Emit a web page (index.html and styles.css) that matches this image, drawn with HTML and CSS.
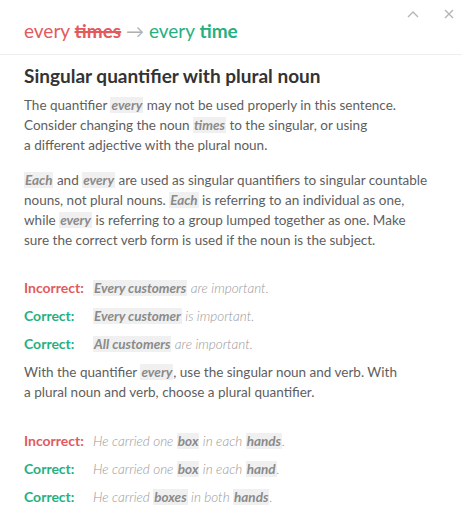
FILE: index.html
```html
<!DOCTYPE html>
<html>
<head>
<meta charset="utf-8">
<link rel="stylesheet" href="styles.css">
</head>
<body>
<div class="card">
  <div class="header">
    <div class="title">
      <span class="bad">every <b class="strike">times</b></span>
      <span class="arrow">&rarr;</span>
      <span class="good">every <b>time</b></span>
    </div>
    <div class="controls">
      <svg class="icon" width="12" height="8" viewBox="0 0 12 8"><path d="M1 7 L6 2 L11 7" fill="none" stroke="#b5b5b5" stroke-width="1.4"/></svg>
      <svg class="icon" width="10" height="10" viewBox="0 0 10 10"><path d="M1 1 L9 9 M9 1 L1 9" fill="none" stroke="#b5b5b5" stroke-width="1.4"/></svg>
    </div>
  </div>
  <div class="content">
    <h1 class="heading">Singular quantifier with plural noun</h1>
    <p class="para">The quantifier <em class="hl">every</em> may not be used properly in this sentence.<br>Consider changing the noun <em class="hl">times</em> to the singular, or using<br>a different adjective with the plural noun.</p>
    <p class="para"><em class="hl">Each</em> and <em class="hl">every</em> are used as singular quantifiers to singular countable<br>nouns, not plural nouns. <em class="hl">Each</em> is referring to an individual as one,<br>while <em class="hl">every</em> is referring to a group lumped together as one. Make<br>sure the correct verb form is used if the noun is the subject.</p>

    <div class="examples first">
      <div class="ex"><span class="label incorrect">Incorrect:</span><span class="sample"><em class="hl">Every customers</em> are important.</span></div>
      <div class="ex"><span class="label correct">Correct:</span><span class="sample"><em class="hl">Every customer</em> is important.</span></div>
      <div class="ex"><span class="label correct">Correct:</span><span class="sample"><em class="hl">All customers</em> are important.</span></div>
    </div>
    <p class="para note">With the quantifier <em class="hl">every</em>, use the singular noun and verb. With<br>a plural noun and verb, choose a plural quantifier.</p>

    <div class="examples second">
      <div class="ex"><span class="label incorrect">Incorrect:</span><span class="sample">He carried one <em class="hl">box</em> in each <em class="hl">hands</em>.</span></div>
      <div class="ex"><span class="label correct">Correct:</span><span class="sample">He carried one <em class="hl">box</em> in each <em class="hl">hand</em>.</span></div>
      <div class="ex"><span class="label correct">Correct:</span><span class="sample">He carried <em class="hl">boxes</em> in both <em class="hl">hands</em>.</span></div>
    </div>
  </div>
</div>
</body>
</html>
```
FILE: styles.css
```css
html, body {
  margin: 0;
  padding: 0;
  background: #fff;
}
body {
  font-family: Lato, "Open Sans", sans-serif;
  width: 462px;
  height: 523px;
  overflow: hidden;
}
.card {
  display: flex;
  flex-direction: column;
}
.header {
  display: flex;
  justify-content: space-between;
  align-items: flex-start;
  height: 54px;
  border-bottom: 1px solid #eeeeee;
  padding: 0 0 0 24px;
}
.title {
  font-size: 19px;
  margin-top: 19px;
  line-height: 24px;
}
.title b { font-weight: 700; }
.bad { color: #e25a5e; }
.good { color: #26b081; }
.strike { text-decoration: line-through; text-decoration-thickness: 1.5px; }
.arrow { color: #b0b0b0; font-size: 18px; }
.controls {
  display: flex;
  gap: 25px;
  align-items: center;
  margin: 9px 8px 0 0;
}
.icon { display: block; }
.content {
  padding: 9px 24px 0 24px;
}
.heading {
  font-size: 19px;
  font-weight: 700;
  color: #333;
  margin: 0 0 7px 0;
  line-height: 24px;
}
.para {
  font-size: 13.5px;
  line-height: 20px;
  color: #5e5e5e;
  margin: 0 0 15px 0;
}
.hl {
  font-style: italic;
  font-weight: 700;
  color: #8a8a8a;
  background: #f0f0f0;
  padding: 0 1px;
}
.examples {
  display: flex;
  flex-direction: column;
  gap: 8px;
  margin-bottom: 8px;
}
.examples.first { margin-top: 28px; }
.examples.second { margin-top: 29px; }
.ex {
  display: flex;
  font-size: 13.5px;
  line-height: 20px;
}
.label {
  width: 69px;
  flex: none;
  font-weight: 700;
  font-size: 14px;
}
.incorrect { color: #e25a5e; }
.correct { color: #26b081; }
.sample {
  font-style: italic;
  font-weight: 300;
  color: #999;
}
.note { margin-top: 0; }
```
